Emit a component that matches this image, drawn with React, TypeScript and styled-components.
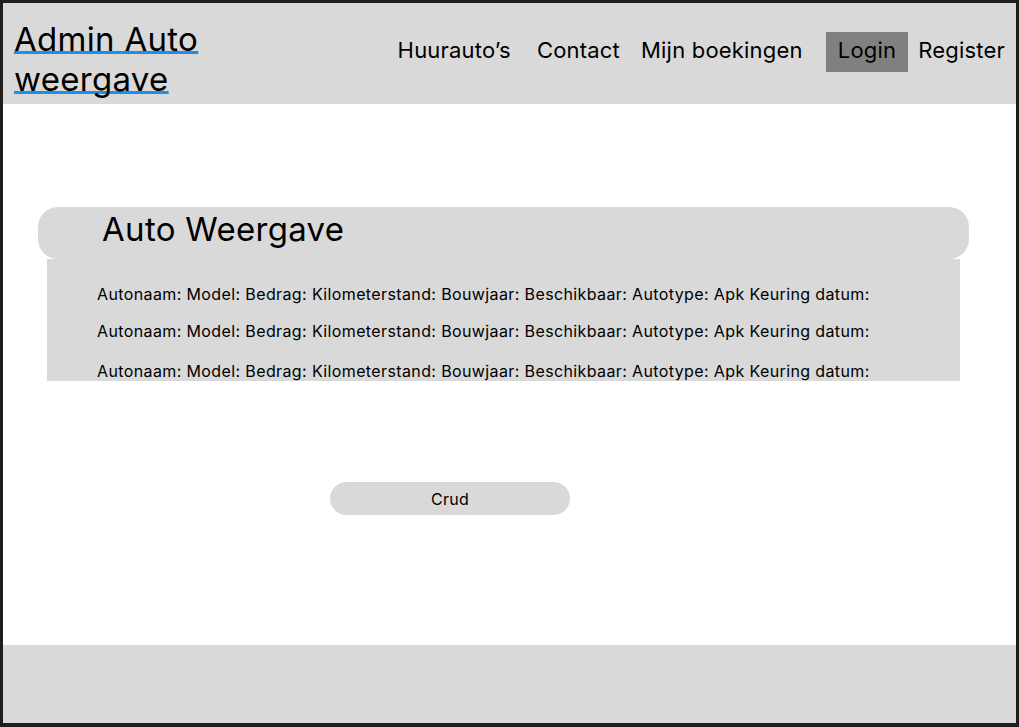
import { ReactElement } from 'react';
import styled, { createGlobalStyle } from 'styled-components';

const GlobalStyle = createGlobalStyle`
    html, body {
        margin: 0;
        padding: 0;
        background: #1e1e1e;
    }

    * {
        box-sizing: border-box;
    }
`;

const Frame = styled.div`
    display: flex;
    flex-direction: column;
    width: 1019px;
    height: 727px;
    border: 3px solid #1e1e1e;
    border-bottom-width: 4px;
    background: #ffffff;
    font-family: Inter, 'Liberation Sans', sans-serif;
    color: #000000;
`;

const Header = styled.header`
    display: flex;
    align-items: flex-start;
    justify-content: space-between;
    height: 101px;
    padding: 16px 11px 0 11px;
    background: #d9d9d9;
`;

const SiteTitle = styled.a`
    width: 200px;
    font-size: 33px;
    line-height: 40px;
    letter-spacing: 0.3px;
    color: #000000;
    text-decoration: underline;
    text-decoration-color: #1f8ee6;
    text-decoration-thickness: 3px;
    text-decoration-skip-ink: none;
    text-underline-offset: 0px;
`;

const Nav = styled.nav`
    display: flex;
    align-items: center;
    margin-top: 13px;
`;

const NavItem = styled.a<{ $active?: boolean; $gap?: number }>`
    display: flex;
    align-items: center;
    height: 40px;
    padding: 0 ${(p) => (p.$active ? '12px' : '0')} 4px;
    margin-left: ${(p) => p.$gap ?? 0}px;
    background: ${(p) => (p.$active ? '#808080' : 'transparent')};
    font-size: 22px;
    letter-spacing: 0.2px;
    color: #000000;
    text-decoration: none;
`;

const Main = styled.main`
    flex: 1;
    padding: 103px 47px 0 35px;
`;

const Card = styled.section`
    display: flex;
    flex-direction: column;
`;

const CardHeader = styled.div`
    display: flex;
    align-items: center;
    height: 52px;
    padding: 0 0 9px 64px;
    border-radius: 20px;
    background: #d9d9d9;
`;

const CardTitle = styled.h2`
    margin: 0;
    font-size: 33px;
    font-weight: 400;
    letter-spacing: 0.3px;
`;

const CardBody = styled.div`
    display: flex;
    flex-direction: column;
    height: 122px;
    margin: 0 9px;
    padding: 25px 0 0 50px;
    overflow: hidden;
    background: #d9d9d9;
`;

const CarRow = styled.p<{ $top: number }>`
    margin: ${(p) => p.$top}px 0 0;
    font-size: 16px;
    line-height: 20px;
    letter-spacing: 0.38px;
    white-space: nowrap;
`;

const CrudButton = styled.button`
    width: 240px;
    height: 33px;
    margin: 101px 0 0 292px;
    border: none;
    border-radius: 17px;
    background: #d9d9d9;
    font-family: Inter, 'Liberation Sans', sans-serif;
    font-size: 16px;
    letter-spacing: 0.3px;
    color: #000000;
`;

const Footer = styled.footer`
    height: 78px;
    background: #d9d9d9;
`;

const navLinks = [
    { label: 'Huurauto’s', gap: 0 },
    { label: 'Contact', gap: 26 },
    { label: 'Mijn boekingen', gap: 21 },
    { label: 'Login', gap: 23, active: true },
    { label: 'Register', gap: 10 },
];

const rowOffsets = [0, 17, 20];

const rowText =
    'Autonaam: Model: Bedrag: Kilometerstand: Bouwjaar: Beschikbaar: Autotype: Apk Keuring datum:';

const App = (): ReactElement => {
    return (
        <>
            <GlobalStyle />
            <Frame>
                <Header>
                    <SiteTitle href="#">Admin Auto weergave</SiteTitle>
                    <Nav>
                        {navLinks.map((link) => (
                            <NavItem key={link.label} href="#" $gap={link.gap} $active={link.active}>
                                {link.label}
                            </NavItem>
                        ))}
                    </Nav>
                </Header>

                <Main>
                    <Card>
                        <CardHeader>
                            <CardTitle>Auto Weergave</CardTitle>
                        </CardHeader>
                        <CardBody>
                            {rowOffsets.map((top, index) => (
                                <CarRow key={`car-row-${index}`} $top={top}>
                                    {rowText}
                                </CarRow>
                            ))}
                        </CardBody>
                    </Card>
                    <CrudButton>Crud</CrudButton>
                </Main>

                <Footer />
            </Frame>
        </>
    );
};

export default App;
